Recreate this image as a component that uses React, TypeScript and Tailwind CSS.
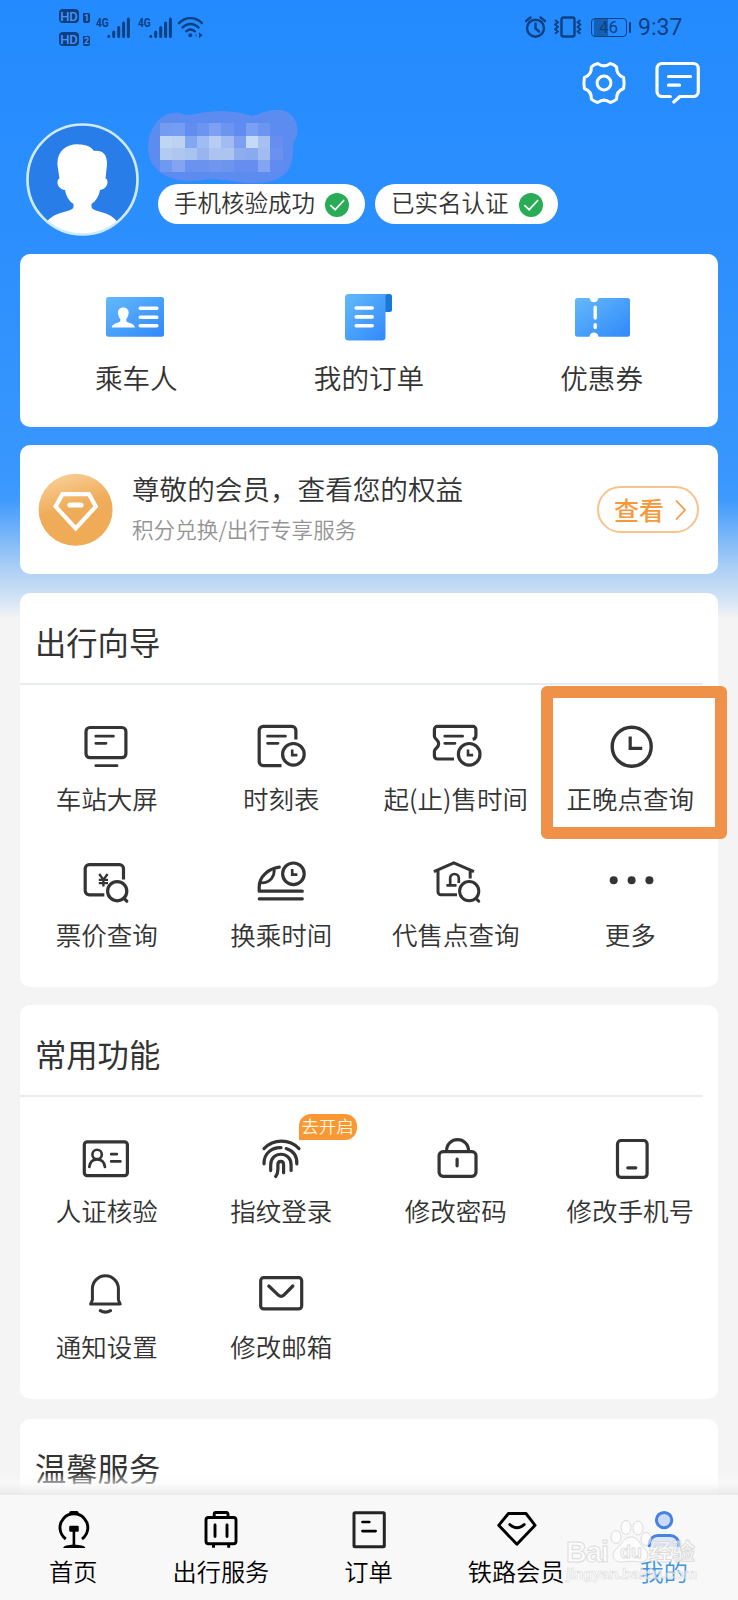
import React from 'react';

const S = ({ children, w = 60, h = 52, sw = 3.2, color = '#343434' }: { children: React.ReactNode; w?: number; h?: number; sw?: number; color?: string }) => (
  <svg width={w} height={h} viewBox={`0 0 ${w} ${h}`} fill="none" stroke={color} strokeWidth={sw} strokeLinecap="round" strokeLinejoin="round" className="shrink-0">
    {children}
  </svg>
);

const MiniClock = ({ x, y }: { x: number; y: number }) => (
  <g>
    <circle cx={x} cy={y} r={10.8} />
    <path d={`M${x - 1.2} ${y - 4.8}v5.600h5.200`} strokeWidth={2.6} strokeLinecap="butt" strokeLinejoin="miter" />
  </g>
);

const Magnifier = ({ x, y }: { x: number; y: number }) => (
  <g>
    <circle cx={x} cy={y} r={9.600} />
    <path d={`M${x + 7} ${y + 7.4}l2.600 2.600`} />
  </g>
);

const StationIcon = () => (
  <S>
    <rect x="9" y="7.500" width="39.900" height="30.200" rx="4" />
    <path d="M18.800 16.200H36.400M18.800 23.300H29M18.800 45.700H40" strokeWidth="2.800" />
  </S>
);

const TimetableIcon = () => (
  <S>
    <path d="M43.900 19.500V10.400a4 4 0 0 0-4-4H11.200a4 4 0 0 0-4 4v31.200a4 4 0 0 0 4 4h18.300" strokeLinecap="butt" />
    <path d="M15.600 16.200H33.400M15.600 23.300H26" strokeWidth="2.800" />
    <MiniClock x={41.4} y={34.3} />
  </S>
);

const SaleTimeIcon = () => (
  <S>
    <path d="M46.700 19.400c2.400-.8 3.200-1.600 3.200-4V9.400a3 3 0 0 0-3-3H11.400a3 3 0 0 0-3 3v6.800c0 3.200 4.300 3.400 4.300 7.600s-4.300 4.400-4.300 7.400V36a3 3 0 0 0 3 3H28" strokeLinecap="butt" />
    <path d="M18.800 16.200H36.600M18.800 23.300H29" strokeWidth="2.800" />
    <MiniClock x={43.2} y={34.3} />
  </S>
);

const ClockIcon = () => (
  <S sw={3.4}>
    <circle cx="30.7" cy="26.7" r="19.500" />
    <path d="M29.200 16.600V28.400H41.200" strokeLinecap="butt" strokeLinejoin="miter" strokeWidth="3.200" />
  </S>
);

const PriceIcon = () => (
  <S>
    <path d="M46.500 23.500V12.600a4 4 0 0 0-4-4H12.200a4 4 0 0 0-4 4v22.200a4 4 0 0 0 4 4h15.100" strokeLinecap="butt" />
    <path d="M22.200 18l4.200 5.600 4.200-5.600M26.400 23.600v6.800M21.800 23.900h9.200M21.800 27.200h9.200" strokeWidth="2.300" strokeLinecap="butt" />
    <Magnifier x={40.2} y={35.2} />
  </S>
);

const TransferIcon = () => (
  <S>
    <path d="M27.300 11.200C16 12.800 7.200 20.700 7.200 30.700v4.500H50.300M7.200 42.800H50.300" />
    <path d="M22.200 13.200c.4 6.300-3 13.700-12.700 13.700" strokeWidth="2.800" />
    <MiniClock x={41.4} y={17.800} />
  </S>
);

const AgencyIcon = () => (
  <S sw={3}>
    <path d="M7.900 15.600L27.800 6.800L48 15.600M12 14.500V35.800a3 3 0 0 0 3 3H31M44.200 14.500V22.500" strokeLinecap="butt" />
    <path d="M20.400 29.300H30.500M24.200 29V22.300a4.300 4.300 0 0 1 8.600 0V27" strokeWidth="2.700" strokeLinecap="butt" />
    <Magnifier x={43.2} y={35.2} />
  </S>
);

const MoreIcon = () => (
  <S>
    <g fill="#343434" stroke="none">
      <circle cx="12.700" cy="24.200" r="4" />
      <circle cx="30.600" cy="24.200" r="4" />
      <circle cx="48.400" cy="24.200" r="4" />
    </g>
  </S>
);

const IdIcon = () => (
  <S>
    <rect x="7.300" y="9.800" width="43.100" height="33.900" rx="3" />
    <circle cx="20.100" cy="22.400" r="4.700" strokeWidth="2.600" />
    <path d="M12.300 35c.6-4.800 3.700-7.600 7.800-7.600s7.200 2.800 7.900 7.600M34.200 22.200H39.800M34.200 29.400H43.400" strokeWidth="2.700" />
  </S>
);

const FingerprintIcon = () => (
  <S>
    <path d="M12 16.600C21.500 6.600 37.500 6.600 47 16.600M12 31.800C11.700 21.400 20 15.200 29 15.600M34.200 16.600C41.500 19 45.200 24.400 44.800 31.800M18.700 38.600V32.900c0-14.200 20.400-14.200 20.400 0v5.500M23.700 44.500c1.800-2.500 2.200-4.300 2.200-7.300v-4.500c0-4.500 5.700-4.500 5.700 0V40.700" />
  </S>
);

const LockIcon = () => (
  <S>
    <rect x="13.100" y="19.600" width="36.900" height="24.700" rx="4" />
    <path d="M20.500 19.300C20.500 3.800 42.600 3.800 42.600 19.300M31.100 27.200V33.800" />
  </S>
);

const PhoneIcon = () => (
  <S>
    <rect x="16.500" y="8.500" width="29.600" height="36.800" rx="3.500" />
    <path d="M26.800 35.800H34.800" />
  </S>
);

const BellIcon = () => (
  <S>
    <path d="M15.400 32V20.800a13 13 0 0 1 26 0V32l1.800 4H13.600z" strokeWidth="3" />
    <path d="M23.300 42.700q5.100 3 10.200 0" />
  </S>
);

const MailIcon = () => (
  <S>
    <rect x="8.700" y="9.700" width="41" height="31.200" rx="3" />
    <path d="M16.800 18L26.600 27.300q2.500 2 5 0L40.800 18" />
  </S>
);

const Blue = ({ id }: { id: string }) => (
  <linearGradient id={id} x1="0" y1="0" x2="1" y2="1">
    <stop offset="0" stopColor="#63b9fb" />
    <stop offset="1" stopColor="#3088fb" />
  </linearGradient>
);

const PassengerIcon = () => (
  <svg width="60" height="50" viewBox="0 0 60 50">
    <defs><Blue id="ga" /></defs>
    <rect x="0" y="5" width="58" height="39.700" rx="2.500" fill="url(#ga)" />
    <path d="M17.300 15.600c3.600 0 5.700 2.500 5.300 6-.3 2.600-1.300 4.300-2.300 5.400v2.300c2 2 8.200 2 8.700 6.300H5.700c.5-4.300 6.500-4.300 8.600-6.300V27c-1.100-1.100-2-2.800-2.300-5.400-.4-3.500 1.700-6 5.300-6z" fill="#fff" />
    <path d="M34.300 16.300H50.800M34.300 25.200H50.800M34.300 33.800H50.800" stroke="#fff" strokeWidth="3.600" strokeLinecap="round" />
  </svg>
);

const OrderIcon = () => (
  <svg width="50" height="50" viewBox="0 0 50 50">
    <defs><Blue id="gb" /></defs>
    <path d="M40 2h5.500a2.500 2.500 0 0 1 2.500 2.500V18a2 2 0 0 1-2 2h-5z" fill="#1b79d6" />
    <path d="M4.500 2h39a2.600 2.600 0 0 0-2 2.600V45a3.600 3.600 0 0 1-3.600 3.600H4.600A3.600 3.600 0 0 1 1 45V5.600A3.600 3.600 0 0 1 4.500 2z" fill="url(#gb)" />
    <path d="M12.200 16H28.200M12.200 24.900H28.200M12.200 33.700H28.200" stroke="#fff" strokeWidth="3.600" strokeLinecap="round" />
  </svg>
);

const CouponIcon = () => (
  <svg width="58" height="50" viewBox="-1 0 58 50">
    <defs><Blue id="gc" /></defs>
    <path d="M3.500 6H15.500c.6 5.600 8.200 5.600 9 0H53.500a2.500 2.500 0 0 1 2.500 2.500V42.300a2.500 2.500 0 0 1-2.500 2.500H24.500c-.8-5.600-8.400-5.600-9 0H3.500A2.500 2.500 0 0 1 1 42.300V8.500A2.500 2.500 0 0 1 3.500 6z" fill="url(#gc)" />
    <path d="M21.200 15.300V26M21.200 32.600V35.600" stroke="#fff" strokeWidth="3.400" strokeLinecap="round" />
  </svg>
);

const Item = ({ icon, label, children }: { icon: React.ReactNode; label: string; children?: React.ReactNode }) => (
  <div className="relative flex h-[135.5px] flex-col items-center">
    {icon}
    <span className="mt-2 mr-px whitespace-nowrap text-[25.500px] leading-9 text-[#333]">{label}</span>
    {children}
  </div>
);

const Section = ({ title, className, children }: { title: string; className: string; children?: React.ReactNode }) => (
  <section className={`mx-5 shrink-0 rounded-[10px] bg-white ${className}`}>
    <div className="mr-[15px] flex h-[92px] items-center border-b-2 border-[#e9eced] pt-2 pl-[15px]">
      <h2 className="text-[31.300px] leading-10 font-normal text-[#333]">{title}</h2>
    </div>
    <div className="grid grid-cols-4 pt-[35px]">{children}</div>
  </section>
);

const Pill = ({ label, className }: { label: string; className: string }) => (
  <div className={`flex h-10 items-center justify-between rounded-full bg-white ${className}`}>
    <span className="-mt-1 whitespace-nowrap text-[23.500px] leading-8 text-[#333]">{label}</span>
    <svg width="24" height="24" viewBox="0 0 24 24" className="mt-0.5">
      <circle cx="12" cy="12" r="12" fill="#28ac55" />
      <path d="M5.800 12.600L10.200 16.700L18.700 7.500" fill="none" stroke="#fff" strokeWidth="1.700" strokeLinecap="round" />
    </svg>
  </div>
);

const mosaic = [
  ['#739bf1', '#759df2', '#628df0', '#6c95f1', '#7ea0f2', '#6c94f1', '#608cf0', '#7b9ff3', '#6c95f1', '#5c8cf0'],
  ['#c0d4f4', '#bdd1f3', '#83a8f2', '#9fbcf4', '#b8cdf4', '#a0bcf2', '#7d9ff0', '#c5d9f8', '#a6c0f3', '#658ef0'],
  ['#b3cbf0', '#b0c6ef', '#a9c3f0', '#98b5ef', '#adc4f0', '#abc4f0', '#8eadee', '#8aaaee', '#a3bbf0', '#6b90ef'],
  ['#6f98f0', '#83a4f0', '#6b92ee', '#6b92ee', '#7096ef', '#6e95ee', '#668eee', '#668eee', '#83a4f0', '#608bef'],
];

const Signal = () => (
  <svg width="23" height="22" viewBox="0 0 23 22" stroke="#0b4082" strokeWidth="3" strokeLinecap="round">
    <path d="M1.800 19.200v.2M6.700 15v4.500M11.700 10.500v9M16.600 6v13.500M21.400 2v17.500" />
  </svg>
);

const Hd = ({ n }: { n: string }) => (
  <div className="flex h-[14px] items-end gap-1">
    <span className="flex h-[14px] w-5 items-center justify-center rounded-[4px] bg-[#0b4082] font-['Roboto'] text-[13px] leading-none font-medium text-[#4a96f5]">HD</span>
    <span className="flex h-[10px] w-[7px] items-center justify-center rounded-[2px] rounded-tl-none bg-[#0b4082] font-['Roboto'] text-[9px] leading-none font-bold text-[#4a96f5]">{n}</span>
  </div>
);

const Tab = ({ icon, label, active = false }: { icon: React.ReactNode; label: string; active?: boolean }) => (
  <div className="flex flex-1 flex-col items-center pt-[13px]">
    {icon}
    <span className={`mt-[3px] mr-px whitespace-nowrap text-[24.200px] leading-8 ${active ? 'text-[#3f96dc]' : 'text-black'}`}>{label}</span>
  </div>
);

export default function App() {
  return (
    <div className="relative flex h-[1600px] w-[738px] flex-col overflow-hidden bg-[#f4f4f4] font-['Noto_Sans_CJK_SC',sans-serif] font-[350]">
      <main className="flex h-[1495px] shrink-0 flex-col overflow-hidden bg-[linear-gradient(180deg,#238bff_0px,#2c8ffd_240px,#3997fe_480px,#3f9afc_500px,#78b5f9_535px,#aed0f6_570px,#cadff5_593px,#f4f4f4_619px)]">
        <div className="flex h-14 shrink-0 items-start pl-[59px]">
          <div className="flex flex-col gap-[9px] pt-[9px]"><Hd n="1" /><Hd n="2" /></div>
          <span className="mt-[14px] ml-[6px] w-3 origin-left scale-x-75 font-['Roboto'] text-[13.500px] leading-4 font-bold text-[#0b4082]">4G</span>
          <span className="mt-[17px] ml-[-1px]"><Signal /></span>
          <span className="mt-[14px] ml-[8px] w-3 origin-left scale-x-75 font-['Roboto'] text-[13.500px] leading-4 font-bold text-[#0b4082]">4G</span>
          <span className="mt-[17px] ml-[-1px]"><Signal /></span>
          <svg width="26" height="22" viewBox="0 0 26 22" fill="none" stroke="#0b4082" strokeWidth="2.400" strokeLinecap="round" className="mt-[16px] ml-[5px]">
            <path d="M2 7.200C8.500.4 18.500.4 25 7.200M5.500 11.500c4.800-4.600 11.200-4.600 16 0M9.200 15.300c2.600-2.300 6-2.300 8.600 0" />
            <circle cx="13.300" cy="19.200" r="2" fill="#0b4082" stroke="none" />
            <path d="M17.500 19.200l2.500-2v4z" fill="#1d6cc8" stroke="none" />
            <path d="M25.500 19.200l-3.500-3v6z" fill="#0b4082" stroke="none" />
          </svg>
          <svg width="21" height="22" viewBox="0 0 21 22" fill="none" stroke="#0b4082" strokeWidth="2.400" className="mt-4 ml-auto">
            <circle cx="10.500" cy="12.200" r="8.500" />
            <path d="M10.500 7.500V12.500L14 15.500M1 5L5.500 1.500M20 5L15.500 1.500" strokeLinecap="round" />
          </svg>
          <svg width="28" height="22" viewBox="0 0 28 22" fill="none" stroke="#0b4082" strokeWidth="2.400" strokeLinejoin="round" className="mt-4 ml-[8px]">
            <rect x="7.500" y="1.500" width="13" height="19" rx="2" />
            <path d="M1 4l3 2.300-3 2.300 3 2.300-3 2.300 3 2.300-3 2.300M26.500 4l-3 2.300 3 2.300-3 2.300 3 2.300-3 2.300 3 2.300" strokeWidth="1.900" />
          </svg>
          <div className="mt-[18px] ml-[9px] flex items-center">
            <div className="flex h-[19px] w-9 items-center justify-center rounded-[4px] border border-[#0b4082] bg-[linear-gradient(90deg,transparent_2px,#1560b4_2px,#1560b4_16px,transparent_16px)] font-['Roboto'] text-[17px] leading-none font-normal text-[#0b4082]">46</div>
            <div className="ml-0.5 h-[11px] w-[2.500px] rounded-sm bg-[#0b4082]" />
          </div>
          <span className="mt-[14px] mr-[56px] ml-[7px] w-[44px] font-['Roboto'] text-[23px] leading-7 font-normal whitespace-nowrap text-[#0b4082]">9:37</span>
        </div>

        <div className="flex h-[54px] shrink-0 items-start justify-end gap-[26px] pt-1 pr-9">
          <svg width="48" height="46" viewBox="-24 -23 48 46" fill="none" stroke="#fff" strokeWidth="3" strokeLinejoin="round">
            <path d="M-6-19.400Q0-14.800 6-19.400Q9.500-18.800 12.600-16.200Q12.200-8.200 19.600-5.500Q20.600 0 19.600 5.500Q12.200 8.200 12.600 16.200Q9.500 18.800 6 19.400Q0 14.800-6 19.400Q-9.500 18.800-12.600 16.200Q-12.200 8.200-19.600 5.500Q-20.600 0-19.600-5.500Q-12.200-8.200-12.600-16.200Q-9.500-18.800-6-19.400z" />
            <circle r="6.900" />
          </svg>
          <svg width="48" height="46" viewBox="0 0 48 46" fill="none" stroke="#fff" strokeWidth="3.200" strokeLinecap="round" strokeLinejoin="round">
            <path d="M16.300 36.500H8a5 5 0 0 1-5-5V8.500a5 5 0 0 1 5-5H39.300a5 5 0 0 1 5 5V31.500a5 5 0 0 1-5 5H26L19.800 42M14.500 16.500H36.500M14.500 25.200H25.500" />
          </svg>
        </div>

        <div className="flex h-36 shrink-0 pl-[26px]">
          <svg width="113" height="113" viewBox="0 0 113 113" className="mt-[13px] shrink-0">
            <defs><clipPath id="av"><circle cx="56.500" cy="56.500" r="55" /></clipPath></defs>
            <circle cx="56.500" cy="56.500" r="55" fill="#297de9" />
            <path clipPath="url(#av)" fill="#fff" d="M31.600 43C30 28 41 20.500 53 21.400C60 21.400 66 24 68 28C77 27 81.500 32 81 42L79.500 55.500C83 56 82.500 66 74 67C73 73 70 78 65.500 81V84C67 90 84 87 92 100V114H20V100C29 87 46 90 47.500 84V81C43 78 40 73 39 67C30.500 66 30 56.500 33.500 55.500z" />
            <circle cx="56.500" cy="56.500" r="55" fill="none" stroke="#cdeaff" strokeWidth="2.700" />
          </svg>
          <div className="ml-[9px] flex flex-col">
            <svg width="150" height="74" viewBox="0 0 150 74">
              <path d="M0 36C1 16 14 0 32 3C38 6 44 5 52 3C70 0 90 1 104 6C116 3 121-1 131-.500C146 1 154 17 147 30C143 36 147 46 142 57C136 69 122 73 108 73C94 74 80 69 62 69C44 72 30 72 18 66C6 60 0 50 0 36z" fill="#5c8cf0" />
              <g shapeRendering="crispEdges">
                {mosaic.map((row, y) => row.map((c, x) => <rect key={`${x}-${y}`} x={12 + x * 12.250} y={13.300 + y * 12.200} width="12.400" height="12.300" fill={c} />))}
              </g>
            </svg>
            <div className="flex gap-[10px] pl-[10px]">
              <Pill label="手机核验成功" className="w-[207px] pr-4 pl-[16px]" />
              <Pill label="已实名认证" className="w-[183px] pr-[15px] pl-[16px]" />
            </div>
          </div>
        </div>

        <section className="mx-5 grid h-[173px] shrink-0 grid-cols-3 rounded-[10px] bg-white pt-[38px]">
          {[
            { icon: <PassengerIcon />, label: '乘车人' },
            { icon: <OrderIcon />, label: '我的订单' },
            { icon: <CouponIcon />, label: '优惠券' },
          ].map((it) => (
            <div key={it.label} className="flex flex-col items-center">
              {it.icon}
              <span className="mt-[15px] text-[27.600px] leading-10 text-[#333]">{it.label}</span>
            </div>
          ))}
        </section>

        <section className="mx-5 mt-[18px] flex h-[129px] shrink-0 items-center rounded-[10px] bg-white pr-[19px] pl-[18px]">
          <svg width="76" height="74" viewBox="0 0 76 74">
            <defs>
              <linearGradient id="gold" x1="0.200" y1="0" x2="0.500" y2="1">
                <stop offset="0" stopColor="#fad09a" />
                <stop offset="0.500" stopColor="#efac59" />
                <stop offset="1" stopColor="#f0ab55" />
              </linearGradient>
            </defs>
            <ellipse cx="37.600" cy="36.800" rx="37" ry="36" fill="url(#gold)" />
            <path d="M24.500 21.200H51L57.800 33.500L37.700 55.500L17.600 33.500z" fill="none" stroke="#fff" strokeWidth="4.200" />
            <path d="M32 32H43" stroke="#fff" strokeWidth="5.200" strokeLinecap="round" />
          </svg>
          <div className="ml-[18px] flex flex-col pb-[7px]">
            <span className="text-[27.600px] leading-10 whitespace-nowrap text-[#333]">尊敬的会员，查看您的权益</span>
            <span className="mt-[5px] text-[21.600px] leading-8 whitespace-nowrap text-[#949494]">积分兑换/出行专享服务</span>
          </div>
          <div className="ml-auto flex h-[47px] w-[102px] items-center justify-center gap-[11px] rounded-full border-2 border-[#f8c48d] pl-1">
            <span className="-mt-0.5 text-[25px] leading-8 font-medium text-[#f7983b]">查看</span>
            <svg width="11" height="22" viewBox="0 0 11 22" fill="none" stroke="#f59a45" strokeWidth="1.800"><path d="M1 1.500L10 11L1 20.500" /></svg>
          </div>
        </section>

        <Section title="出行向导" className="mt-[19px] h-[394px]">
          <Item icon={<StationIcon />} label="车站大屏" />
          <Item icon={<TimetableIcon />} label="时刻表" />
          <Item icon={<SaleTimeIcon />} label="起(止)售时间" />
          <Item icon={<ClockIcon />} label="正晚点查询">
            <div className="absolute -top-[34px] -left-[2.500px] h-[153px] w-[186px] rounded-[6px] border-[12px] border-[#f0914a]" />
          </Item>
          <Item icon={<PriceIcon />} label="票价查询" />
          <Item icon={<TransferIcon />} label="换乘时间" />
          <Item icon={<AgencyIcon />} label="代售点查询" />
          <Item icon={<MoreIcon />} label="更多" />
        </Section>

        <Section title="常用功能" className="mt-[18px] h-[394px]">
          <Item icon={<IdIcon />} label="人证核验" />
          <Item icon={<FingerprintIcon />} label="指纹登录">
            <span className="absolute -top-[18px] left-[104px] flex h-[26px] w-[58px] items-center justify-center rounded-[12px] rounded-bl-none bg-[#f99832] pb-0.5 text-[17.500px] leading-none whitespace-nowrap text-[#fff6e0]">去开启</span>
          </Item>
          <Item icon={<LockIcon />} label="修改密码" />
          <Item icon={<PhoneIcon />} label="修改手机号" />
          <Item icon={<BellIcon />} label="通知设置" />
          <Item icon={<MailIcon />} label="修改邮箱" />
        </Section>

        <Section title="温馨服务" className="mt-5 h-[394px]" />
      </main>

      <div className="absolute top-[1473px] left-0 h-[22px] w-full bg-[linear-gradient(180deg,rgba(255,255,255,0)_0%,rgba(250,250,250,0.6)_50%,rgba(233,233,233,0.95)_100%)]" />

      <nav className="flex h-[105px] shrink-0 bg-[#f8f8f8]">
        <Tab
          label="首页"
          icon={
            <S w={48} h={44} color="#000" sw={2.9}>
              <path d="M15.800 31A13.900 13.900 0 1 1 32 31" strokeLinecap="butt" />
              <path d="M21 4.700h5.800" strokeWidth="3.600" />
              <path d="M20.500 19H27.500V22.500H20.500z" strokeWidth="2.600" fill="#000" />
              <path d="M23.900 22V37" strokeWidth="2.600" />
              <path d="M13.300 40C13.300 37.500 18 37.300 23.900 36.500C30 37.300 35.300 37.500 35.300 40z" fill="#000" stroke="none" />
            </S>
          }
        />
        <Tab
          label="出行服务"
          icon={
            <S w={48} h={44} color="#000" sw={2.9}>
              <rect x="9" y="9.500" width="30" height="26.200" rx="2.500" />
              <path d="M17.200 8V6a1.500 1.500 0 0 1 1.500-1.500h10.800A1.500 1.500 0 0 1 31 6v2M18 17V28.500M30 17V28.500" />
              <path d="M16.500 36v3.800M31.700 36v3.800" strokeLinecap="butt" />
            </S>
          }
        />
        <Tab
          label="订单"
          icon={
            <S w={48} h={44} color="#242424" sw={3}>
              <rect x="9" y="4.800" width="30.300" height="33.900" rx="1" />
              <path d="M17.500 14H24.300M17.500 23.100H30.600" stroke="#000" strokeWidth="2.700" />
            </S>
          }
        />
        <Tab
          label="铁路会员"
          icon={
            <S w={48} h={44} color="#000" sw={2.9}>
              <path d="M15.400 5.500H33L42.100 17.300L23.900 36.300L5.700 17.300z" />
              <path d="M16.800 16.500Q24 23.200 31.200 16.500" />
            </S>
          }
        />
        <Tab
          active
          label="我的"
          icon={
            <S w={48} h={44} color="#4682e2" sw={3}>
              <circle cx="24.100" cy="12.100" r="7.700" fill="#cbdafa" />
              <path d="M9.300 39V36a8.500 8.500 0 0 1 8.500-8.500H30.300A8.500 8.500 0 0 1 38.800 36v3" fill="#dfe8fb" strokeLinecap="butt" />
            </S>
          }
        />
      </nav>

      <div className="absolute top-[1517px] left-[565px] h-[70px] w-[135px]">
        <svg width="135" height="70" viewBox="0 0 135 70" fill="#fff" fillOpacity="0.550" stroke="#cfcfcf" strokeOpacity="0.700" strokeWidth="1" className="font-['Liberation_Sans','Noto_Sans_CJK_SC',sans-serif]">
          <ellipse cx="51" cy="20" rx="5" ry="6.500" />
          <ellipse cx="61" cy="10.500" rx="5" ry="7" />
          <ellipse cx="73" cy="11" rx="5" ry="7" />
          <ellipse cx="81" cy="22" rx="5" ry="6.500" />
          <path d="M66 20c7 0 9 8 14 12 6 5 2 14-5 13-6-1-11-1-18 0-8 1-12-8-6-13 6-4 7-12 15-12z" />
          <text x="1" y="44.500" fontSize="29" fontWeight="700" textLength="43">Bai</text>
          <text x="55" y="41" fontSize="18" fontWeight="700" textLength="22">du</text>
          <text x="84" y="43" fontSize="23" fontWeight="700">经验</text>
          <text x="1" y="62" fontSize="15.500" fontWeight="700" textLength="131" strokeWidth="0.600">jingyan.baidu.com</text>
        </svg>
      </div>
    </div>
  );
}
